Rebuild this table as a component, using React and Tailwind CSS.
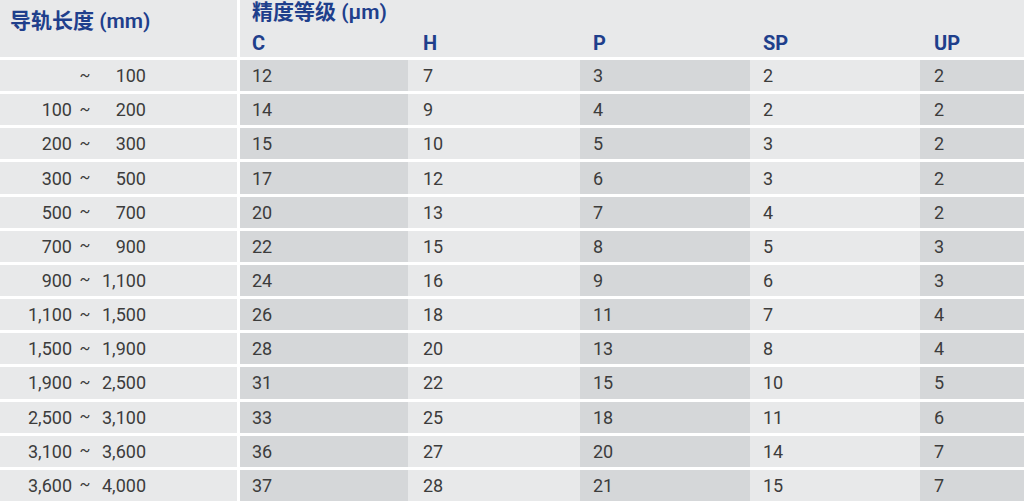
import React from 'react';

const rows = [
  ['', '100', 12, 7, 3, 2, 2],
  ['100', '200', 14, 9, 4, 2, 2],
  ['200', '300', 15, 10, 5, 3, 2],
  ['300', '500', 17, 12, 6, 3, 2],
  ['500', '700', 20, 13, 7, 4, 2],
  ['700', '900', 22, 15, 8, 5, 3],
  ['900', '1,100', 24, 16, 9, 6, 3],
  ['1,100', '1,500', 26, 18, 11, 7, 4],
  ['1,500', '1,900', 28, 20, 13, 8, 4],
  ['1,900', '2,500', 31, 22, 15, 10, 5],
  ['2,500', '3,100', 33, 25, 18, 11, 6],
  ['3,100', '3,600', 36, 27, 20, 14, 7],
  ['3,600', '4,000', 37, 28, 21, 15, 7],
];

const grades = ['C', 'H', 'P', 'SP', 'UP'];

// widths of the grade columns, last one fills the rest
const colW = ['w-[168px]', 'w-[172px]', 'w-[170px]', 'w-[170px]', 'flex-1'];
const colBg = ['bg-[#d5d7d9]', 'bg-[#e8e9ea]', 'bg-[#d5d7d9]', 'bg-[#e8e9ea]', 'bg-[#d5d7d9]'];
const colPad = ['pl-[12px]', 'pl-[15px]', 'pl-[13px]', 'pl-[13px]', 'pl-[14px]'];

export default function App() {
  return (
    <div
      className="w-[1024px] h-[501px] bg-white flex flex-col gap-[3px] overflow-hidden"
      style={{ fontFamily: "Roboto, 'Noto Sans CJK SC', sans-serif" }}
    >
      {/* Header */}
      <div className="h-[57px] flex gap-[3px] shrink-0">
        <div className="w-[237px] bg-[#e8e9ea] pl-[10px] pt-[9px] text-[21px] font-semibold text-[#1f3f8c] leading-[24px]">
          导轨长度 (mm)
        </div>
        <div className="flex-1 bg-[#e8e9ea] flex flex-col">
          <div className="pl-[12px] pt-0 text-[21px] font-semibold text-[#1f3f8c] leading-[24px]">
            精度等级 (μm)
          </div>
          <div className="flex mt-[8px]">
            {grades.map((g, i) => (
              <div key={g} className={`${colW[i]} ${colPad[i]} text-[20px] font-bold text-[#1f3f8c] leading-[22px]`}>
                {g}
              </div>
            ))}
          </div>
        </div>
      </div>

      {/* Body */}
      <div className="flex-1 grid grid-rows-13 gap-[3px]">
        {rows.map((r) => (
          <div key={r[1]} className="flex gap-[3px] text-[18px] text-[#3c3c3c]">
            <div className="w-[237px] bg-[#e8e9ea] flex items-center">
              <span className="w-[72px] text-right">{r[0]}</span>
              <span className="w-[16px] ml-[5px] text-center text-[16px]">~</span>
              <span className="w-[53px] text-right">{r[1]}</span>
            </div>
            <div className="flex-1 flex">
              {r.slice(2).map((v, i) => (
                <div key={i} className={`${colW[i]} ${colBg[i]} ${colPad[i]} flex items-center`}>
                  {v}
                </div>
              ))}
            </div>
          </div>
        ))}
      </div>
    </div>
  );
}
